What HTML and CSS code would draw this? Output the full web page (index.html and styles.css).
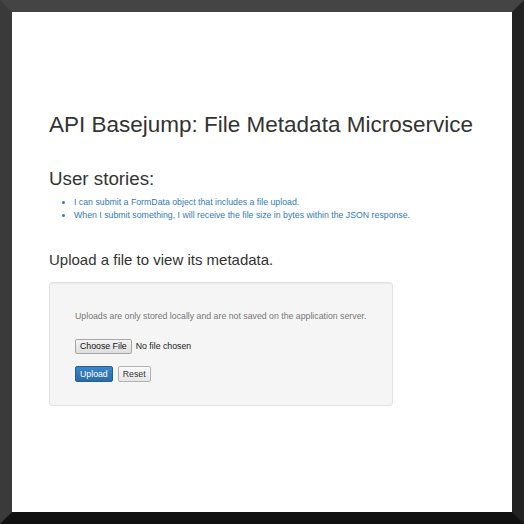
FILE: index.html
```html
<!DOCTYPE html>
<html lang="en">
<head>
<meta charset="utf-8">
<title>API Basejump: File Metadata Microservice</title>
<link rel="stylesheet" href="styles.css">
</head>
<body>
<div class="frame">
  <div class="container">
    <h1 class="title">API Basejump: File Metadata Microservice</h1>
    <h2 class="subtitle">User stories:</h2>
    <ul class="stories">
      <li>I can submit a FormData object that includes a file upload.</li>
      <li>When I submit something, I will receive the file size in bytes within the JSON response.</li>
    </ul>
    <h3 class="section">Upload a file to view its metadata.</h3>
    <div class="well">
      <p class="note">Uploads are only stored locally and are not saved on the application server.</p>
      <div class="file-row">
        <span class="choose">Choose File</span>
        <span class="chosen">No file chosen</span>
      </div>
      <div class="actions">
        <span class="btn btn-primary">Upload</span>
        <span class="btn btn-default">Reset</span>
      </div>
    </div>
  </div>
</div>
</body>
</html>
```
FILE: styles.css
```css
html, body {
  margin: 0;
  padding: 0;
  background: #fff;
}
body {
  font-family: "Liberation Sans", Arial, sans-serif;
  font-size: 8.75px;
  line-height: 12.5px;
  color: #333;
}
.frame {
  width: 524px;
  height: 524px;
  box-sizing: border-box;
  border-style: solid;
  border-width: 12px;
  border-top-color: #444444;
  border-left-color: #3a3a3a;
  border-right-color: #222222;
  border-bottom-color: #111111;
  background: #fff;
  overflow: hidden;
}
.container {
  padding: 0 37px;
}
.title {
  margin: 101px 0 0;
  font-size: 22.5px;
  line-height: 1.1;
  font-weight: 400;
  color: #333;
}
.subtitle {
  margin: 31px 0 0;
  font-size: 18.75px;
  line-height: 1.1;
  font-weight: 400;
  color: #333;
}
.stories {
  margin: 7px 0 0;
  padding-left: 25px;
  color: #337ab7;
}
.stories li {
  line-height: 12.5px;
}
.section {
  margin: 31px 0 0;
  font-size: 15px;
  line-height: 1.1;
  font-weight: 400;
  color: #333;
}
.well {
  margin-top: 13px;
  width: 344px;
  box-sizing: border-box;
  padding: 27px 20px 23px 25px;
  background: #f5f5f5;
  border: 1px solid #e3e3e3;
  border-radius: 3px;
  box-shadow: inset 0 1px 1px rgba(0,0,0,0.05);
}
.note {
  margin: 0;
  color: #777;
  white-space: nowrap;
}
.file-row {
  margin-top: 16.5px;
  display: flex;
  align-items: center;
  gap: 4px;
  color: #222;
}
.choose {
  display: inline-block;
  height: 15px;
  box-sizing: border-box;
  padding: 0 4px;
  line-height: 13px;
  border: 1px solid #a6a6a6;
  border-radius: 2px;
  background: linear-gradient(#f4f4f4, #dedede);
  color: #111;
}
.chosen {
  color: #222;
}
.actions {
  margin-top: 12px;
  display: flex;
  gap: 5px;
}
.btn {
  display: inline-block;
  height: 16px;
  box-sizing: border-box;
  padding: 0 4px;
  line-height: 14px;
  border: 1px solid transparent;
  border-radius: 2px;
}
.btn-primary {
  background: linear-gradient(#3a86c6, #2b6ca8);
  border-color: #245e92;
  color: #fff;
}
.btn-default {
  background: linear-gradient(#fafafa, #e6e6e6);
  border-color: #b3b3b3;
  color: #333;
}
```
